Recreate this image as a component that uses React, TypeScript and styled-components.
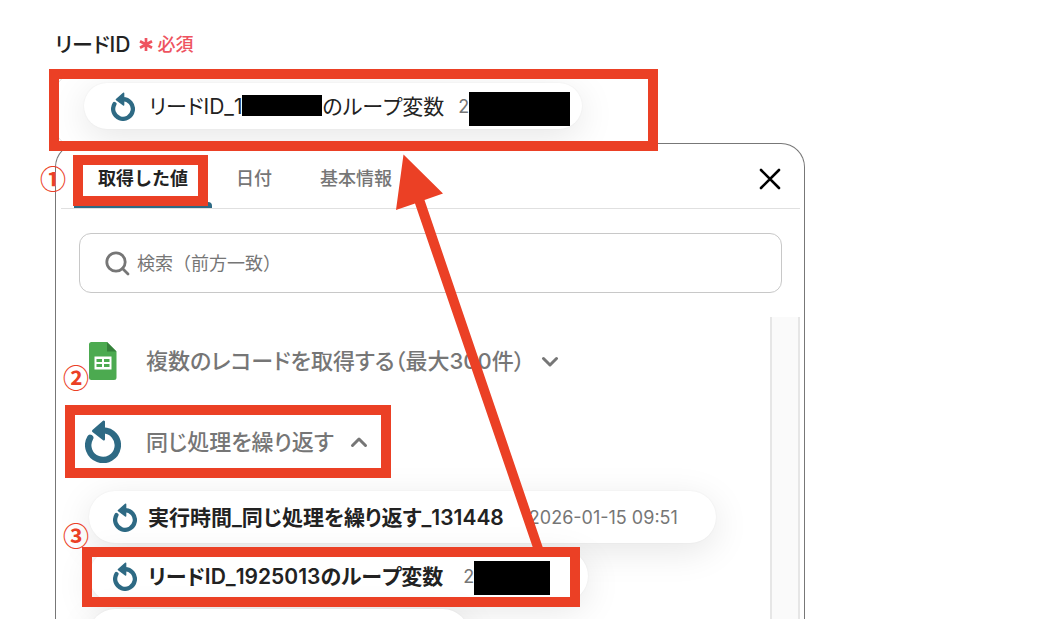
import React from "react";
import styled, { createGlobalStyle } from "styled-components";

const TEAL = "#2e6a84";
const RED = "#eb4025";
const GRAY = "#767676";
const FONT = `Inter, "Noto Sans CJK JP", sans-serif`;
const CHIP_SHADOW = "0 8px 36px rgba(0, 0, 0, 0.1), 0 0 2px rgba(0, 0, 0, 0.06)";

const GlobalStyle = createGlobalStyle`
  *, *::before, *::after { box-sizing: border-box; }
  body { margin: 0; background: #fff; color: #222; font-family: ${FONT}; font-kerning: none; }
  button, input { font: inherit; font-kerning: inherit; color: inherit; }
`;

const Page = styled.main`
  position: relative;
  height: 100vh;
  overflow: hidden;
  display: flex;
  flex-direction: column;
  padding: 28px 24px 0 55px;
`;

const FieldLabel = styled.div`
  display: flex;
  align-items: center;
  gap: 9px;
  height: 30px;
  font-size: 21px;
  font-weight: 500;
  font-feature-settings: "palt";
`;

const Required = styled.span`
  display: flex;
  align-items: center;
  gap: 4px;
  color: #ee5360;
  font-size: 18px;
`;

const Field = styled.div`
  flex: none;
  width: 100%;
  max-width: 600px;
  height: 74px;
  margin-top: 15px;
  padding: 9px 28px;
  border: 1px solid #ddd;
  border-radius: 20px;
  overflow: hidden;
`;

const Chip = styled.button<{ $compact?: boolean }>`
  display: flex;
  align-items: center;
  flex: none;
  width: max-content;
  height: ${(p) => (p.$compact ? 46 : 52)}px;
  padding: 0 ${(p) => (p.$compact ? 12 : 38)}px 0 ${(p) => (p.$compact ? 27 : 24)}px;
  border: 0;
  border-radius: 26px;
  background: #fff;
  box-shadow: ${CHIP_SHADOW};
  font-weight: ${(p) => (p.$compact ? 400 : 600)};
`;

const PendingChip = styled.div`
  flex: none;
  width: 60%;
  max-width: 380px;
  height: 52px;
  border-radius: 26px;
  background: #fff;
  box-shadow: ${CHIP_SHADOW};
`;

const ChipName = styled.span<{ $gap?: number }>`
  display: flex;
  align-items: center;
  margin-left: ${(p) => p.$gap ?? 11}px;
  padding-bottom: 2px;
  font-size: 21px;
  white-space: nowrap;
  font-feature-settings: "palt";
`;

const ChipValue = styled.span<{ $gap?: number }>`
  display: flex;
  align-items: center;
  margin-left: ${(p) => p.$gap ?? 20}px;
  color: ${GRAY};
  font-size: 18px;
  font-weight: 400;
  white-space: nowrap;
`;

const Redaction = styled.span<{ $w: number; $h: number; $drop?: number }>`
  display: block;
  width: ${(p) => p.$w}px;
  height: ${(p) => p.$h}px;
  margin-top: ${(p) => p.$drop ?? 0}px;
  background: #000;
`;

const Panel = styled.section`
  flex: 1 0 auto;
  display: flex;
  flex-direction: column;
  width: 100%;
  max-width: 750px;
  margin-top: -4px;
  padding: 0 4px 0 5px;
  border: 1px solid #777;
  border-bottom: 0;
  border-radius: 24px 24px 0 0;
  background: #fff;
`;

const TabBar = styled.div`
  display: flex;
  align-items: stretch;
  height: 65px;
  padding: 0 19px 0 13px;
  border-bottom: 1px solid #e0e0e0;
`;

const Tab = styled.button<{ $active?: boolean }>`
  position: relative;
  padding: 6px 24px 0;
  border: 0;
  background: none;
  color: ${(p) => (p.$active ? "#222" : GRAY)};
  font-size: 18px;
  font-weight: ${(p) => (p.$active ? 700 : 500)};
  line-height: 24px;
  &::after {
    content: "";
    display: ${(p) => (p.$active ? "block" : "none")};
    position: absolute;
    inset: auto 0 0;
    height: 6px;
    border-radius: 4px 4px 0 0;
    background: ${TEAL};
  }
`;

const Close = styled.button`
  display: flex;
  align-items: center;
  margin-left: auto;
  padding: 6px 0 0;
  border: 0;
  background: none;
`;

const SearchBox = styled.label`
  display: flex;
  align-items: center;
  gap: 7px;
  height: 60px;
  margin: 24px 18px;
  padding: 0 25px;
  border: 1px solid #c8c8c8;
  border-radius: 12px;
  color: ${GRAY};
`;

const SearchInput = styled.input`
  flex: 1;
  min-width: 0;
  padding: 0;
  border: 0;
  outline: 0;
  background: none;
  font-size: 18px;
  &::placeholder { color: ${GRAY}; opacity: 1; }
`;

const ListArea = styled.div`
  flex: 1;
  display: flex;
  min-height: 302px;
`;

const List = styled.div`
  flex: 1;
  min-width: 0;
  padding: 3px 0 0 24px;
`;

const ScrollTrack = styled.div`
  flex: none;
  width: 30px;
  border: solid #e6e6e6;
  border-width: 0 2px;
  background: #fafafa;
`;

const GroupButton = styled.button`
  display: flex;
  align-items: center;
  height: 81px;
  padding: 0;
  border: 0;
  background: none;
  color: ${GRAY};
  font-size: 22px;
  font-weight: 500;
  white-space: nowrap;
  font-feature-settings: "palt";
`;

const GroupIcon = styled.span`
  display: flex;
  justify-content: center;
  width: 36px;
  margin-right: 25px;
`;

const GroupName = styled.span`
  margin-right: 16px;
  padding-bottom: 4px;
`;

const Chips = styled.div`
  display: flex;
  flex-direction: column;
  gap: 7px;
  padding: 9px 0 0 4px;
`;

const Frame = styled.div<{ $x: number; $y: number; $w: number; $h: number }>`
  position: absolute;
  left: ${(p) => p.$x}px;
  top: ${(p) => p.$y}px;
  width: ${(p) => p.$w}px;
  height: ${(p) => p.$h}px;
  border: 10px solid ${RED};
  pointer-events: none;
`;

const StepMark = styled.span<{ $x: number; $y: number }>`
  position: absolute;
  left: ${(p) => p.$x}px;
  top: ${(p) => p.$y}px;
  color: ${RED};
  font: 700 26px/26px "Noto Sans CJK JP", sans-serif;
`;

const Arrow = styled.svg`
  position: absolute;
  left: 390px;
  top: 150px;
  pointer-events: none;
`;

const LoopIcon = ({ size = 24 }: { size?: number }) => (
  <svg width={size} height={Math.round(size * 1.2)} viewBox="0 0 36 43" fill="none" aria-hidden="true">
    <path d="M5.200 17.800A14.800 14.800 0 1 0 18 10.400" stroke={TEAL} strokeWidth="6.400" strokeLinecap="round" />
    <path d="M8.200 11 18.800 1.700V19.200Z" fill={TEAL} stroke={TEAL} strokeWidth="2.400" strokeLinejoin="round" />
  </svg>
);

const SheetIcon = () => (
  <svg width="28" height="38" viewBox="0 0 28 38" aria-hidden="true">
    <path d="M2.5 0H18l9.500 9.500V35.500A2.500 2.500 0 0 1 25 38H2.500A2.500 2.500 0 0 1 0 35.500v-33A2.500 2.500 0 0 1 2.500 0Z" fill="#4caa50" />
    <path d="M18 0 27.500 9.500H18Z" fill="#35803a" />
    <path d="M5.500 14.500H22.500V27.500H5.500Z" fill="#fff" />
    <path d="M7.500 17h5.500v3H7.500zM15 17h5.500v3H15zM7.500 22h5.500v3H7.500zM15 22h5.500v3H15z" fill="#4caa50" />
  </svg>
);

const Chevron = ({ up }: { up?: boolean }) => (
  <svg width="18" height="12" viewBox="0 0 18 12" fill="none" stroke={GRAY} strokeWidth="3" strokeLinecap="round" strokeLinejoin="round" aria-hidden="true">
    <path d={up ? "M2.500 9.500 9 3l6.500 6.500" : "M2.500 3.500 9 10l6.500-6.500"} />
  </svg>
);

export default function App() {
  return (
    <>
      <GlobalStyle />
      <Page>
        <FieldLabel>
          リードID
          <Required>
            <svg width="14" height="18" viewBox="0 0 14 18" stroke="#ee5360" strokeWidth="2.700" aria-hidden="true">
              <path d="M7 4v13M1 7.200l12 6.600M13 7.200 1 13.800" />
            </svg>
            必須
          </Required>
        </FieldLabel>
        <Field>
          <Chip $compact type="button">
            <LoopIcon />
            <ChipName $gap={14}>
              リードID_1
              <Redaction $w={80} $h={21} />
              のループ変数
            </ChipName>
            <ChipValue $gap={14}>
              2<Redaction $w={101} $h={34} $drop={5} />
            </ChipValue>
          </Chip>
        </Field>

        <Panel>
          <TabBar role="tablist">
            <Tab $active role="tab" aria-selected="true">取得した値</Tab>
            <Tab role="tab" aria-selected="false">日付</Tab>
            <Tab role="tab" aria-selected="false">基本情報</Tab>
            <Close type="button" aria-label="閉じる">
              <svg width="22" height="22" viewBox="0 0 22 22" stroke="#000" strokeWidth="2.600" strokeLinecap="round" aria-hidden="true">
                <path d="M2 2l18 18M20 2 2 20" />
              </svg>
            </Close>
          </TabBar>

          <SearchBox>
            <svg width="25" height="25" viewBox="0 0 25 25" fill="none" stroke={GRAY} strokeWidth="2.800" strokeLinecap="round" aria-hidden="true">
              <circle cx="11" cy="11" r="9.200" />
              <path d="M17.500 17.500 23 23" />
            </svg>
            <SearchInput type="text" aria-label="検索" placeholder="検索（前方一致）" />
          </SearchBox>

          <ListArea>
            <List>
              <GroupButton type="button" aria-expanded="false">
                <GroupIcon><SheetIcon /></GroupIcon>
                <GroupName>複数のレコードを取得する（最大300件）</GroupName>
                <Chevron />
              </GroupButton>
              <GroupButton type="button" aria-expanded="true">
                <GroupIcon><LoopIcon size={36} /></GroupIcon>
                <GroupName>同じ処理を繰り返す</GroupName>
                <Chevron up />
              </GroupButton>
              <Chips>
                <Chip type="button">
                  <LoopIcon />
                  <ChipName>実行時間_同じ処理を繰り返す_131448</ChipName>
                  <ChipValue $gap={25}>2026-01-15 09:51</ChipValue>
                </Chip>
                <Chip type="button">
                  <LoopIcon />
                  <ChipName>リードID_1925013のループ変数</ChipName>
                  <ChipValue>
                    2<Redaction $w={76} $h={34} $drop={4} />
                  </ChipValue>
                </Chip>
                <PendingChip />
              </Chips>
            </List>
            <ScrollTrack />
          </ListArea>
        </Panel>

        <Frame $x={49} $y={69} $w={609} $h={82} />
        <Frame $x={73} $y={155} $w={135} $h={51} />
        <Frame $x={65} $y={405} $w={326} $h={73} />
        <Frame $x={82} $y={547} $w={498} $h={60} />
        <StepMark $x={40} $y={165}>①</StepMark>
        <StepMark $x={63} $y={364}>②</StepMark>
        <StepMark $x={63} $y={522}>③</StepMark>
        <Arrow width="160" height="404" viewBox="0 0 160 404" fill={RED} aria-hidden="true">
          <path d="M13.500 4.500 53 43.500 34.500 50 153 398H143L25 53.500 6 60Z" />
        </Arrow>
      </Page>
    </>
  );
}
